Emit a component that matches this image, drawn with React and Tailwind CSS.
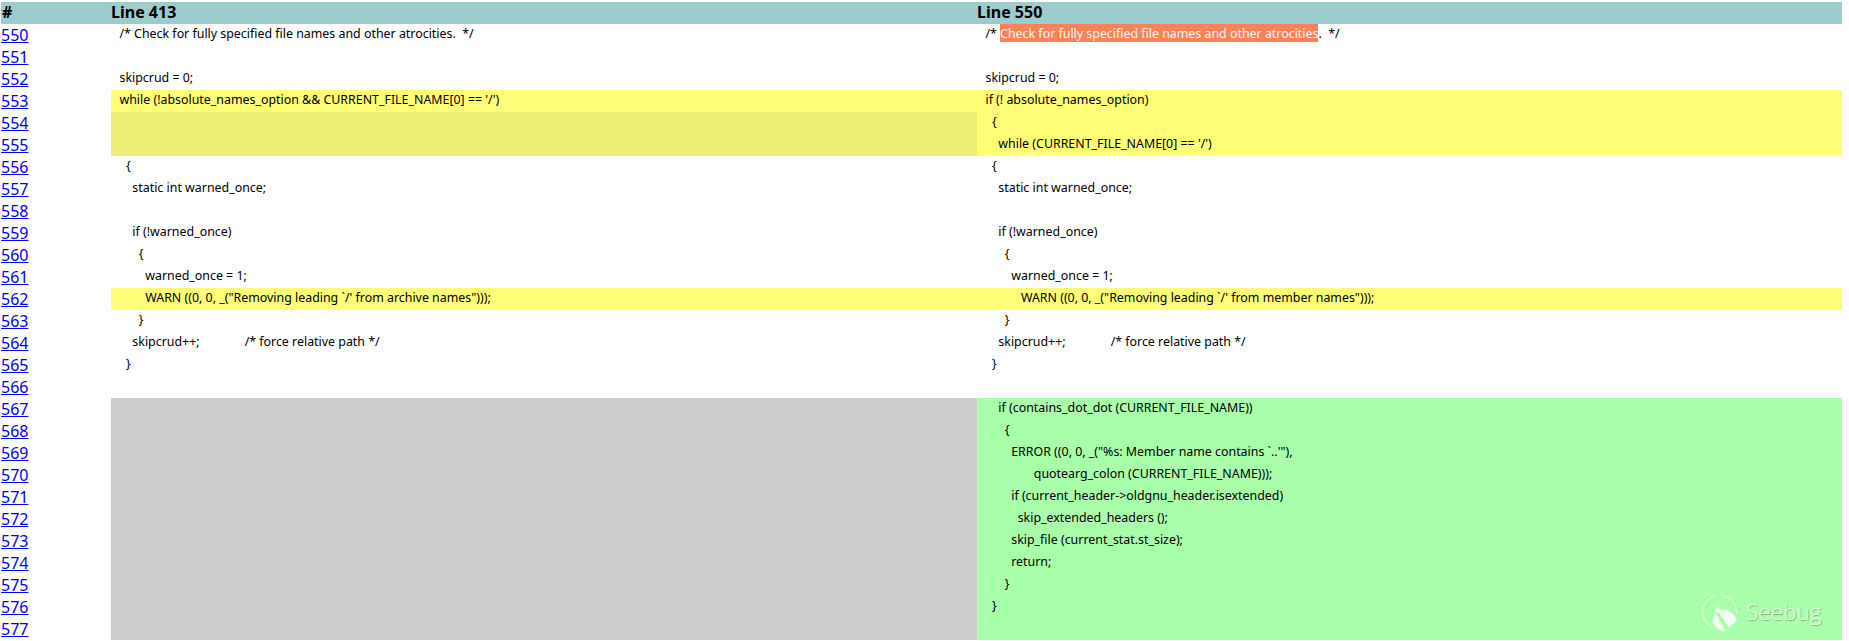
const YELLOW = 'bg-[#ffff77]'
const DULL = 'bg-[#eeee77]'
const GREEN = 'bg-[#aaffaa]'
const GRAY = 'bg-[#cccccc]'

// [line number, left text, left bg, right text, right bg]
const ROWS = [
  [550, '  /* Check for fully specified file names and other atrocities.  */', '', 'highlight', ''],
  [551, '', '', '', ''],
  [552, '  skipcrud = 0;', '', '  skipcrud = 0;', ''],
  [553, "  while (!absolute_names_option && CURRENT_FILE_NAME[0] == '/')", YELLOW, '  if (! absolute_names_option)', YELLOW],
  [554, '', DULL, '    {', YELLOW],
  [555, '', DULL, "      while (CURRENT_FILE_NAME[0] == '/')", YELLOW],
  [556, '    {', '', '    {', ''],
  [557, '      static int warned_once;', '', '      static int warned_once;', ''],
  [558, '', '', '', ''],
  [559, '      if (!warned_once)', '', '      if (!warned_once)', ''],
  [560, '        {', '', '        {', ''],
  [561, '          warned_once = 1;', '', '          warned_once = 1;', ''],
  [562, '          WARN ((0, 0, _("Removing leading `/\' from archive names")));', YELLOW, '             WARN ((0, 0, _("Removing leading `/\' from member names")));', YELLOW],
  [563, '        }', '', '        }', ''],
  [564, '      skipcrud++;              /* force relative path */', '', '      skipcrud++;              /* force relative path */', ''],
  [565, '    }', '', '    }', ''],
  [566, '', '', '', ''],
  [567, '', GRAY, '      if (contains_dot_dot (CURRENT_FILE_NAME))', GREEN],
  [568, '', GRAY, '        {', GREEN],
  [569, '', GRAY, '          ERROR ((0, 0, _("%s: Member name contains `..\'"),', GREEN],
  [570, '', GRAY, '                 quotearg_colon (CURRENT_FILE_NAME)));', GREEN],
  [571, '', GRAY, '          if (current_header->oldgnu_header.isextended)', GREEN],
  [572, '', GRAY, '            skip_extended_headers ();', GREEN],
  [573, '', GRAY, '          skip_file (current_stat.st_size);', GREEN],
  [574, '', GRAY, '          return;', GREEN],
  [575, '', GRAY, '        }', GREEN],
  [576, '', GRAY, '    }', GREEN],
  [577, '', GRAY, '', GREEN],
]

function Cell({ bg, children }) {
  return (
    <div className={`h-[22px] pl-[2px] text-[12.4px] leading-[20px] whitespace-pre text-black overflow-hidden ${bg}`}>
      {children}
    </div>
  )
}

function Watermark() {
  return (
    <div className="absolute left-[1702px] top-[596px] flex items-center gap-[6px] pointer-events-none">
      <svg width="38" height="38" viewBox="0 0 38 38" fill="none">
        <path d="M10.5 31.5A17 17 0 1 1 34.5 17" stroke="#f2fff2" strokeWidth="1" />
        <path d="M16 15C22 11 31 15 35 24L27 32Z" fill="#f2fff2" />
        <path d="M13 18C10 22 10 28 14 31C16 33 19 35 22 35.7L23 34L14 18Z" fill="#f2fff2" />
        <circle cx="15.5" cy="14.5" r="2.2" fill="#f2fff2" />
        <path d="M14 12l-1-2M17 11.5l.5-2" stroke="#f2fff2" strokeWidth="0.8" />
      </svg>
      <span className="font-['Open_Sans',sans-serif] font-light text-[22.5px] leading-none text-[#ecffec] [text-shadow:1px_1px_1px_rgba(0,0,0,0.3)] -mt-[6px]">
        Seebug
      </span>
    </div>
  )
}

export default function App() {
  return (
    <div className="relative w-[1849px] h-[641px] bg-white pt-[2px] pl-[1px] overflow-hidden font-['Noto_Sans',sans-serif]">
      <div className="w-[1841px]">
        <div className="grid grid-cols-[110px_866px_865px] h-[22px] bg-[#9ccccc] text-black font-bold text-base leading-[20px]">
          <div className="pl-[1px]">#</div>
          <div>Line 413</div>
          <div>Line 550</div>
        </div>
        {ROWS.map(([num, left, leftBg, right, rightBg]) => (
          <div key={num} className="grid grid-cols-[110px_866px_865px] h-[22px]">
            <a href="#" className="text-[#0000ee] underline text-base leading-[22px]">{num}</a>
            <Cell bg={leftBg}>{left}</Cell>
            <Cell bg={rightBg}>
              {right === 'highlight' ? (
                <>
                  {'  /* '}
                  <span className="bg-[#f78457] text-[#fff5ee] pt-[2px]">Check for fully specified file names and other atrocities</span>
                  {'.  */'}
                </>
              ) : right}
            </Cell>
          </div>
        ))}
      </div>
      <Watermark />
    </div>
  )
}
